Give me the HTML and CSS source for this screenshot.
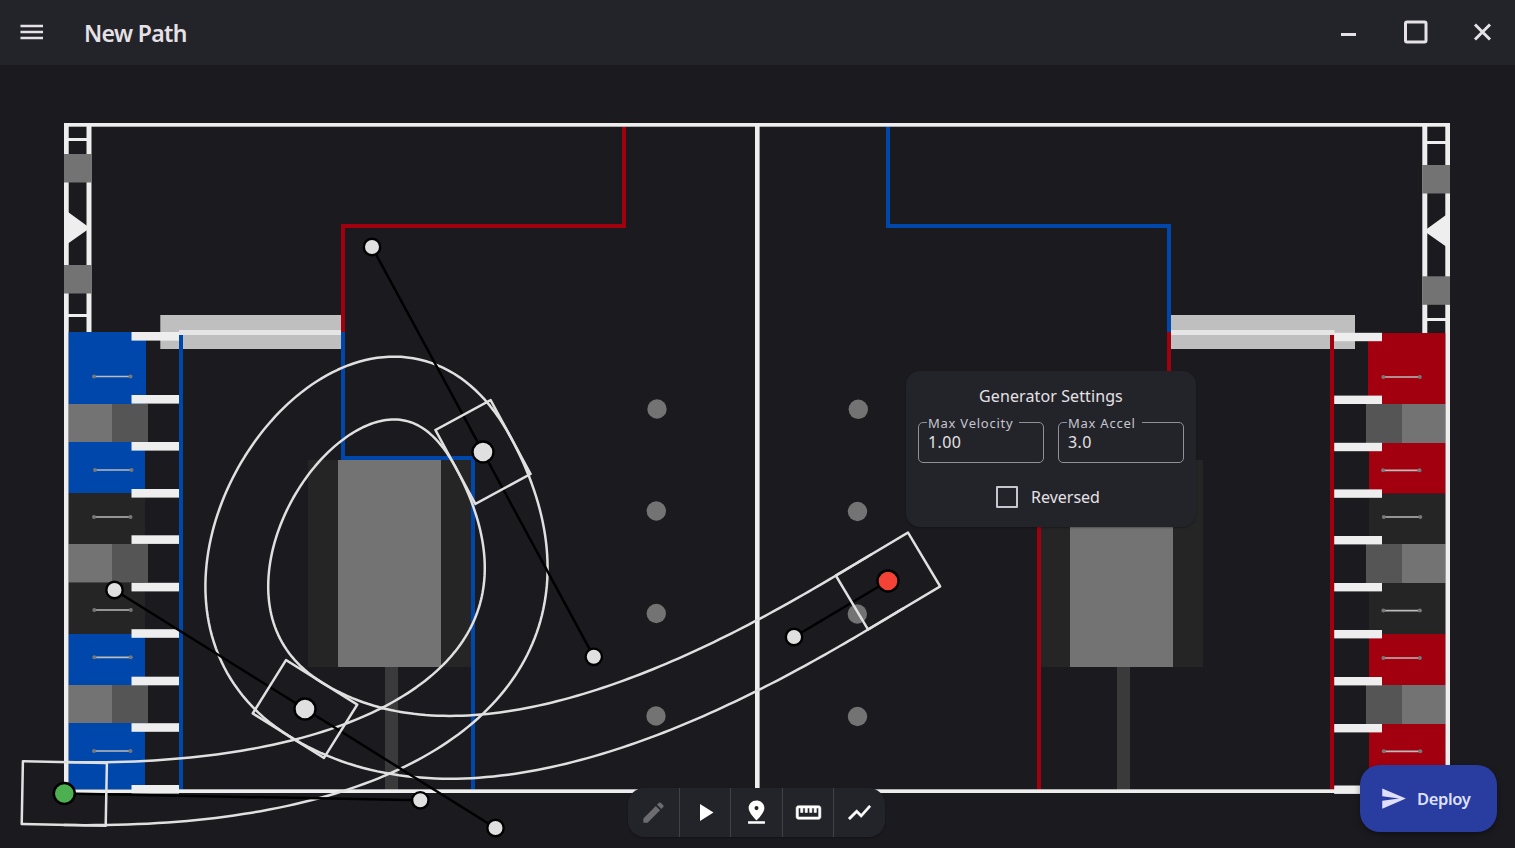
FILE: index.html
```html
<!DOCTYPE html>
<html lang="en">
<head>
<meta charset="utf-8">
<title>New Path</title>
<link rel="stylesheet" href="styles.css">
</head>
<body>
<div class="app">
  <header class="titlebar">
    <svg class="menu" viewBox="0 0 24 16"><path d="M0.500 2H23M0.500 8H23M0.500 14H23"/></svg>
    <h1 class="title">New Path</h1>
    <div class="window-controls">
      <svg viewBox="0 0 26 26"><path d="M6 15.500H21" stroke-width="3"/></svg>
      <svg viewBox="0 0 26 26"><rect x="3.500" y="3" width="20.500" height="20" rx="1.500" stroke-width="3"/></svg>
      <svg viewBox="0 0 26 26"><path d="M6 5.500L21 20.500M21 5.500L6 20.500" stroke-width="3"/></svg>
    </div>
  </header>
  <main class="editor">
    <svg class="field" viewBox="0 65 1515 783">
      <g fill="#bfbfbf"><rect x="160.300" y="315" width="181" height="34"/><rect x="1170" y="315" width="185" height="34"/></g>
      <g fill="#252525"><rect x="308" y="460" width="165" height="207"/><rect x="1039" y="460" width="164" height="207"/></g>
      <g fill="#737373"><rect x="338" y="460" width="103" height="207"/><rect x="1070" y="460" width="103" height="207"/></g>
      <g fill="#3a3a3a"><rect x="385" y="667" width="13" height="123"/><rect x="1117" y="667" width="13" height="123"/></g>
      <g class="tape">
        <path class="red" d="M624 127V226H343V332"/>
        <path class="blue" d="M343 332V458H473V789.500"/>
        <path class="blue" d="M888 127V226H1169V332"/>
        <path class="red" d="M1169 332V458H1039V789.500"/>
      </g>
      <g fill="#e5e5e5"><rect x="179" y="330" width="162" height="5"/><rect x="1171" y="330" width="163.500" height="5"/></g>
      <g class="tape"><path class="blue" d="M181 335V789.500"/><path class="red" d="M1332 335V789.500"/></g>
      <g fill="#eee">
        <rect x="64" y="123" width="1386" height="3.700"/><rect x="64" y="789.300" width="1386" height="3.700"/>
        <rect x="64" y="123" width="4.700" height="670"/><rect x="1445.300" y="123" width="4.700" height="670"/>
        <rect x="755" y="125" width="4.600" height="666"/>
        <rect x="86.500" y="125" width="5" height="207"/><rect x="1422.300" y="125" width="5" height="208"/>
        <rect x="68" y="138" width="19" height="3"/><rect x="68" y="314" width="19" height="3"/>
        <rect x="1427" y="141" width="19" height="3"/><rect x="1427" y="318" width="19" height="3"/>
        <path d="M68 212L90 228L68 243.500ZM1446 215L1424 231L1446 246.500Z"/>
      </g>
      <g fill="#737373">
        <rect x="64" y="154" width="27.800" height="28.500"/><rect x="64" y="265" width="27.800" height="28.500"/>
        <rect x="1422.200" y="165" width="27.800" height="28.500"/><rect x="1422.200" y="276.300" width="27.800" height="28.500"/>
        <circle cx="657" cy="409" r="9.700"/><circle cx="656.300" cy="511" r="9.700"/><circle cx="656.300" cy="613.500" r="9.700"/><circle cx="656" cy="716" r="9.700"/>
        <circle cx="858.300" cy="409.300" r="9.700"/><circle cx="857.500" cy="511.500" r="9.700"/><circle cx="857.300" cy="614" r="9.700"/><circle cx="857.500" cy="716.500" r="9.700"/>
      </g>
      <g id="grids"></g>
      <g id="route"></g>
    </svg>

    <section class="settings">
      <h2 class="settings-title">Generator Settings</h2>
      <div class="inputs">
        <fieldset class="input"><legend>Max Velocity</legend><span>1.00</span></fieldset>
        <fieldset class="input"><legend>Max Accel</legend><span>3.0</span></fieldset>
      </div>
      <div class="check"><i class="box"></i><span>Reversed</span></div>
    </section>

    <nav class="tools">
      <div class="tool off"><svg viewBox="0 0 24 24"><path d="M3 17.250V21h3.750L17.810 9.940l-3.750-3.750L3 17.250zM20.710 7.040a1 1 0 0 0 0-1.410l-2.340-2.340a1 1 0 0 0-1.410 0l-1.830 1.830 3.750 3.750 1.830-1.830z"/></svg></div>
      <div class="tool"><svg viewBox="0 0 24 24"><path d="M8 4.500v15l12-7.500z"/></svg></div>
      <div class="tool"><svg viewBox="0 0 24 24"><path d="M19 8.500C19 4.700 15.900 1.700 12 1.700S5 4.700 5 8.500c0 4.500 7 11 7 11s7-6.500 7-11zm-8.800 0a1.800 1.800 0 1 1 3.600 0 1.800 1.800 0 0 1-3.600 0zM4.500 20.200v2.300h15v-2.300z" transform="translate(0 -.4)"/></svg></div>
      <div class="tool"><svg class="bold" viewBox="0 0 24 24"><path d="M21 6H3c-1.100 0-2 .9-2 2v8c0 1.100.9 2 2 2h18c1.100 0 2-.9 2-2V8c0-1.100-.9-2-2-2zm0 10H3V8h2v4h2V8h2v4h2V8h2v4h2V8h2v4h2V8h2v8z"/></svg></div>
      <div class="tool"><svg class="bold" viewBox="0 0 24 24"><path d="M3.500 18.490l6-6.010 4 4L22 6.920l-1.410-1.410-7.090 7.970-4-4L2 16.990z"/></svg></div>
    </nav>

    <div class="deploy"><svg viewBox="0 0 24 24"><path d="M2.010 21L23 12 2.010 3 2 10l15 2-15 2z"/></svg><span>Deploy</span></div>
  </main>
</div>
<script src="field.js"></script>
</body>
</html>
```
FILE: styles.css
```css
* { box-sizing: border-box; }
body { margin: 0; background: #1b1a1f; color: #e5e1e6; font-family: "Noto Sans", "Open Sans", sans-serif; }
.app { width: 1515px; height: 848px; display: flex; flex-direction: column; overflow: hidden; }
.titlebar { height: 65px; flex: none; display: flex; align-items: center; background: #232429; padding: 0 20px 2px; }
.menu { width: 24px; height: 16px; fill: none; stroke: #e5e1e6; stroke-width: 2.6; }
.title { margin: 3px 0 0 40px; font-size: 23px; font-weight: 600; line-height: 30px; letter-spacing: -0.65px; }
.window-controls { margin-left: auto; display: flex; gap: 41px; }
.window-controls svg { width: 26px; height: 26px; fill: none; stroke: #e5e1e6; }
.editor { position: relative; flex: 1; }
.field { display: block; width: 1515px; height: 783px; }

.tape path { fill: none; stroke-width: 4; }
.red { stroke: #a3000f; }
.blue { stroke: #0047ab; }
.peg { stroke: #bbb; stroke-width: 1.7; }
.knob { fill: #777; }
.edge { fill: none; stroke: #e0e0e0; stroke-width: 2.5; stroke-linejoin: round; }
.arm { stroke: #000; stroke-width: 2.5; }
.node { stroke: #000; stroke-width: 2.4; }

.settings { position: absolute; left: 906px; top: 306px; width: 290px; height: 156px; padding: 13px 12px; border-radius: 14px; background: #232429; box-shadow: 0 1px 2px rgba(0,0,0,.3); display: flex; flex-direction: column; }
.settings-title { margin: 0; font-size: 16px; line-height: 24px; font-weight: 400; text-align: center; letter-spacing: .1px; }
.inputs { display: flex; gap: 14px; margin-top: 6px; }
.input { flex: 1; min-width: 0; height: 49px; margin: 0; padding: 0 0 0 9px; border: 1px solid #918f9a; border-radius: 5px; }
.input legend { height: 16px; padding: 0 6px 0 1px; margin-left: -1px; font-size: 13px; line-height: 18px; letter-spacing: .75px; color: #c7c5d0; }
.input span { display: block; font-size: 16px; line-height: 24px; letter-spacing: .4px; }
.check { display: flex; align-items: center; gap: 13px; margin: 21px 0 0 78px; font-size: 16px; line-height: 24px; }
.box { width: 22px; height: 22px; border: 2.4px solid #c7c5d0; border-radius: 1px; }
.check span { margin-top: 1px; }

.tools { position: absolute; left: 628px; top: 723px; width: 257px; height: 49px; display: flex; border-radius: 16px; background: #232429; box-shadow: 0 1px 2px rgba(0,0,0,.3); }
.tool { flex: 1; display: grid; place-items: center; }
.tool + .tool { border-left: 1px solid #414248; }
.tool svg { width: 27px; height: 27px; fill: #fff; }
.tool .bold { stroke: #fff; stroke-width: .5; }
.tool.off svg { fill: #6c6b70; }

.deploy { position: absolute; left: 1360px; top: 700px; width: 137px; height: 67px; padding-left: 20px; display: flex; align-items: center; gap: 10px; border-radius: 20px; background: #293ca0; color: #dfe0ff; font-size: 16.5px; font-weight: 600; letter-spacing: -.35px; box-shadow: 0 3px 6px rgba(0,0,0,.35); }
.deploy svg { width: 27px; height: 27px; fill: #dfe0ff; }
```
FILE: field.js
```js
const NS = 'http://www.w3.org/2000/svg';
function add(parent, tag, attrs) {
  const el = document.createElementNS(NS, tag);
  for (const k in attrs) el.setAttribute(k, attrs[k]);
  parent.appendChild(el);
}
const grids = document.getElementById('grids');
const rect = (x0, y0, x1, y1, fill) =>
  add(grids, 'rect', { x: x0, y: y0, width: x1 - x0, height: y1 - y0, fill });

// Scoring grids: team-colored, dark and gray cells stacked top to bottom.
const kinds = ['team', 'gray', 'team', 'dark', 'gray', 'dark', 'team', 'gray', 'team'];
function grid(tops, color, left) {
  kinds.forEach((kind, i) => {
    const a = tops[i], b = tops[i + 1];
    if (kind === 'gray') {
      if (left) { rect(68.7, a, 112, b, '#737373'); rect(112, a, 148, b, '#555'); }
      else { rect(1366, a, 1402, b, '#555'); rect(1402, a, 1445.3, b, '#737373'); }
    } else {
      const wide = i === 0 ? 1 : 0;
      const fill = kind === 'team' ? color : '#252525';
      if (left) rect(68.7, a, 145 + wide, b, fill);
      else rect(1369 - wide, a, 1445.3, b, fill);
    }
  });
}
grid([332, 404, 442, 493, 544, 582.7, 634, 685, 723, 789.3], '#0047ab', true);
grid([333, 404, 443, 493.7, 544, 583, 634, 685, 724, 789.3], '#a3000f', false);
[332, 395, 442, 489, 535.3, 582.8, 629.2, 676.7, 723.2, 785].forEach(y => rect(131.5, y, 179, y + 8.6, '#eee'));
[332.8, 395.6, 442.8, 489.4, 536, 583, 630, 677, 724, 785.5].forEach(y => rect(1334.2, y, 1382, y + 8.4, '#eee'));
[[94, 376.5], [95, 470], [94, 517], [94.3, 610], [94.3, 657.3], [94, 751],
 [1383.3, 377], [1383, 470.3], [1383.8, 517], [1383.4, 610.6], [1383.4, 658], [1383.8, 751.3]].forEach(([x, y]) => {
  add(grids, 'line', { class: 'peg', x1: x, x2: x + 36.5, y1: y, y2: y });
  add(grids, 'circle', { class: 'knob', cx: x, cy: y, r: 2 });
  add(grids, 'circle', { class: 'knob', cx: x + 36.5, cy: y, r: 2 });
});

// Route: cubic segments, drawn as two wheel tracks at a fixed offset.
const route = document.getElementById('route');
const pts = [[64.3, 793.5], [420.3, 800.3], [593.8, 656.8], [483, 452], [372, 247],
  [114.5, 590], [305, 709], [495.5, 828], [794, 637], [888, 581]];
const HALF_W = 31.4, HALF_L = 42;
for (const side of [-1, 1]) {
  let d = '';
  for (let s = 0; s + 3 < pts.length; s += 3) {
    const [a, b, c, e] = pts.slice(s, s + 4);
    for (let i = 0; i <= 100; i++) {
      const t = i / 100, u = 1 - t;
      const p = [0, 1].map(k => u*u*u*a[k] + 3*u*u*t*b[k] + 3*u*t*t*c[k] + t*t*t*e[k]);
      const v = [0, 1].map(k => u*u*(b[k]-a[k]) + 2*u*t*(c[k]-b[k]) + t*t*(e[k]-c[k]));
      const n = Math.hypot(v[0], v[1]);
      d += (d ? 'L' : 'M') + (p[0] - side*HALF_W*v[1]/n).toFixed(2) + ' ' + (p[1] + side*HALF_W*v[0]/n).toFixed(2);
    }
  }
  add(route, 'path', { class: 'edge', d });
}
const arm = (a, b) => add(route, 'line', { class: 'arm', x1: pts[a][0], y1: pts[a][1], x2: pts[b][0], y2: pts[b][1] });
function robot(i, from, to) {
  const ang = Math.atan2(pts[to][1] - pts[from][1], pts[to][0] - pts[from][0]) * 180 / Math.PI;
  add(route, 'rect', { class: 'edge', x: -HALF_L, y: -HALF_W, width: HALF_L * 2, height: HALF_W * 2,
    transform: `translate(${pts[i]}) rotate(${ang})` });
}
const node = (i, r, fill) => add(route, 'circle', { class: 'node', cx: pts[i][0], cy: pts[i][1], r, fill });
arm(0, 1); arm(2, 4); arm(5, 7); arm(8, 9);
robot(0, 0, 1); robot(3, 2, 4); robot(6, 5, 7); robot(9, 8, 9);
[1, 2, 4, 5, 7, 8].forEach(i => node(i, 8.2, '#e0e0e0'));
node(0, 10.5, '#4caf50'); node(3, 10.5, '#e0e0e0'); node(6, 10.5, '#e0e0e0'); node(9, 10.5, '#f44336');
```
